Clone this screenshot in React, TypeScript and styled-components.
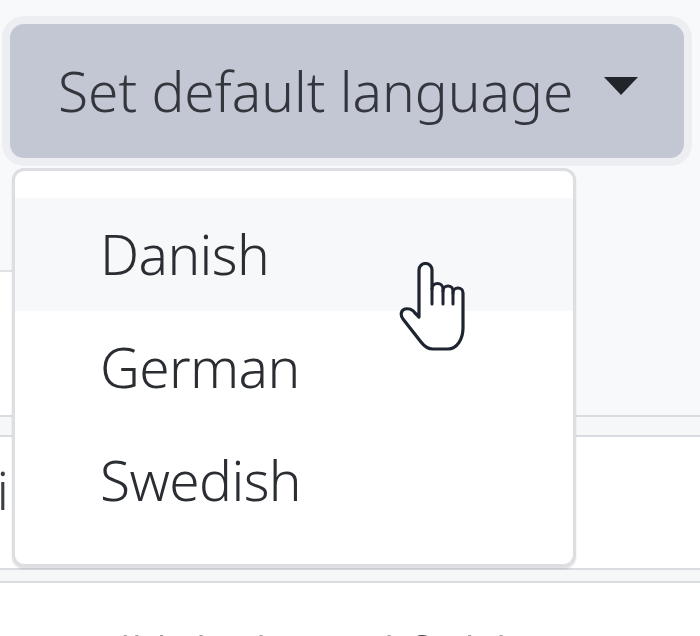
import React from 'react';
import styled, { createGlobalStyle } from 'styled-components';

const GlobalStyle = createGlobalStyle`
  html, body {
    margin: 0;
    padding: 0;
    background: #ffffff;
  }
  body {
    font-family: "Noto Sans", "Open Sans", "Liberation Sans", sans-serif;
    color: #212529;
  }
`;

const Page = styled.div`
  width: 700px;
  height: 636px;
  overflow: hidden;
  position: relative;
`;

const Header = styled.div`
  height: 415px;
  background: #f8f9fa;
  display: flex;
  flex-direction: column;
  box-sizing: border-box;
`;

const Toolbar = styled.div`
  height: 270px;
  box-sizing: border-box;
  padding: 24px 0 0 10px;
`;

const LeftPanel = styled.div`
  flex: 1;
  width: 320px;
  background: #ffffff;
  border-top: 2px solid #dfe2e6;
`;

const Band: any = styled.div`
  height: ${(props: any) => props.height}px;
  background: #f6f7f9;
  border-top: 2px solid #d9dce1;
  border-bottom: 2px solid #d9dce1;
`;

const Row: any = styled.div`
  height: ${(props: any) => props.height}px;
  box-sizing: border-box;
  padding-top: ${(props: any) => props.padTop}px;
  display: flex;
  align-items: flex-start;
  font-size: 54px;
  font-weight: 300;
  line-height: 84px;
  white-space: nowrap;
  overflow: hidden;
  color: #3b3f45;
`;

const PeekCell = styled.div`
  width: 9px;
  display: flex;
  justify-content: flex-end;
  overflow: hidden;
  flex-shrink: 0;
`;

const TextCell = styled.div`
  margin-left: 82px;
  letter-spacing: -1px;
`;

const Dropdown = styled.div`
  position: relative;
  display: inline-block;
`;

const Toggle = styled.button`
  display: inline-flex;
  align-items: center;
  width: 674px;
  height: 134px;
  box-sizing: border-box;
  padding: 0 0 0 45px;
  margin: 0;
  border: 3px solid #c2c7d3;
  border-radius: 14px;
  background: #c2c7d3;
  color: #33373d;
  font-family: "Noto Sans", "Open Sans", "Liberation Sans", sans-serif;
  font-size: 55px;
  font-weight: 300;
  line-height: 84px;
  box-shadow: 0 0 0 8px #edeef2;
  outline: none;
  cursor: pointer;
`;

const Label = styled.span`
  letter-spacing: 0px;
`;

const Caret = styled.span`
  display: inline-block;
  margin-left: 31px;
  margin-top: -10px;
  width: 0;
  height: 0;
  border-top: 18px solid #212529;
  border-left: 17px solid transparent;
  border-right: 17px solid transparent;
`;

const Menu = styled.div`
  position: absolute;
  top: calc(100% + 10px);
  left: 2px;
  width: 564px;
  box-sizing: border-box;
  padding: 27px 0;
  background: #ffffff;
  border: 3px solid #dcdee1;
  border-radius: 12px;
  box-shadow: 0 2px 2px rgba(0, 0, 0, 0.12);
  z-index: 10;
`;

const Item: any = styled.div`
  padding: 14px 84px 15px 85px;
  font-size: 55px;
  font-weight: 300;
  line-height: 84px;
  color: #2a2d32;
  letter-spacing: -0.6px;
  background: ${(props: any) => (props.active ? '#f7f8fa' : 'transparent')};
`;

const Cursor = styled.svg`
  position: absolute;
  left: 398px;
  top: 262px;
  z-index: 20;
`;

const languages = ['Danish', 'German', 'Swedish'];

const HandCursor = () => (
  <Cursor width="70" height="92" viewBox="0 0 70 92">
    <path
      d="M21 46 V8 a6.5 6.5 0 0 1 13 0 V27 a5.5 5.5 0 0 1 11 0 v2 a5 5 0 0 1 10 0 v2 a5 5 0 0 1 10 0 V66 c0 11 -6 21 -15 21 H35 c-5 0 -9 -3 -12 -7 L5 57 c-3 -4 -2 -9 2 -10 c4 -1 8 1 10 4 L21 55 Z"
      fill="#ffffff"
      stroke="#1f2530"
      strokeWidth="3.2"
      strokeLinejoin="round"
    />
    <path d="M34 27 V42 M45 29 V42 M55 31 V42" stroke="#1f2530" strokeWidth="3" strokeLinecap="round" />
  </Cursor>
);

export default function App() {
  return (
    <>
      <GlobalStyle />
      <Page>
        <Header>
          <Toolbar>
            <Dropdown>
              <Toggle>
                <Label>Set default language</Label>
                <Caret />
              </Toggle>
              <Menu>
                {languages.map((lang: string, i: number) => (
                  <Item key={i} active={i === 0}>
                    {lang}
                  </Item>
                ))}
              </Menu>
            </Dropdown>
          </Toolbar>
          <LeftPanel />
        </Header>
        <Band height={18} />
        <Row height={131} padTop={10}>
          <PeekCell>
            <span>i</span>
          </PeekCell>
        </Row>
        <Band height={11} />
        <Row height={60} padTop={30}>
          <PeekCell>
            <span>i</span>
          </PeekCell>
          <TextCell>all labels and fields</TextCell>
        </Row>
        <HandCursor />
      </Page>
    </>
  );
}
